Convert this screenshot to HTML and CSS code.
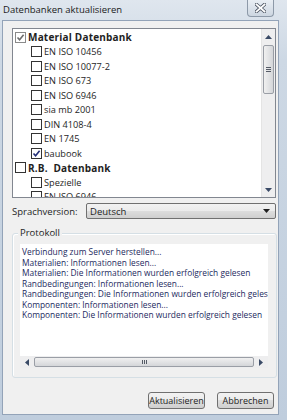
FILE: index.html
```html
<!DOCTYPE html>
<html lang="de">
<head>
    <meta charset="UTF-8">
    <title>Datenbanken aktualisieren</title>
    <link rel="stylesheet" href="styles.css">
</head>
<body>
    <div class="window">
        <div class="titlebar">
            <span class="title">Datenbanken aktualisieren</span>
            <span class="close">
                <svg width="11" height="10" viewBox="0 0 11 10">
                    <path d="M1.5 1.5 L9.5 8.5 M9.5 1.5 L1.5 8.5" stroke="#4a5260" stroke-width="3.4" stroke-linecap="square"/>
                    <path d="M1.5 1.5 L9.5 8.5 M9.5 1.5 L1.5 8.5" stroke="#ffffff" stroke-width="1.8" stroke-linecap="square"/>
                </svg>
            </span>
        </div>
        <div class="client">
            <div class="tree">
                <div class="tree-list">
                    <div class="row root"><span class="cb grey checked"><svg viewBox="0 0 9 9"><path d="M1.5 4.5 L3.6 6.8 L7.6 1.8" /></svg></span><b>Material Datenbank</b></div>
                    <div class="row child"><span class="cb"></span>EN ISO 10456</div>
                    <div class="row child"><span class="cb"></span>EN ISO 10077-2</div>
                    <div class="row child"><span class="cb"></span>EN ISO 673</div>
                    <div class="row child"><span class="cb"></span>EN ISO 6946</div>
                    <div class="row child"><span class="cb"></span>sia mb 2001</div>
                    <div class="row child"><span class="cb"></span>DIN 4108-4</div>
                    <div class="row child"><span class="cb"></span>EN 1745</div>
                    <div class="row child"><span class="cb checked"><svg viewBox="0 0 9 9"><path d="M1.5 4.5 L3.6 6.8 L7.6 1.8" /></svg></span>baubook</div>
                    <div class="row root"><span class="cb"></span><b>R.B.&nbsp; Datenbank</b></div>
                    <div class="row child"><span class="cb"></span>Spezielle</div>
                    <div class="row child"><span class="cb"></span>EN ISO 6946</div>
                </div>
                <div class="vscroll">
                    <span class="arrow"><svg width="7" height="4" viewBox="0 0 7 4"><path d="M0 4 L3.5 0 L7 4 Z" fill="#3a4a66"/></svg></span>
                    <div class="track">
                        <div class="thumb"><span class="grip"></span></div>
                    </div>
                    <span class="arrow"><svg width="7" height="4" viewBox="0 0 7 4"><path d="M0 0 L3.5 4 L7 0 Z" fill="#3a4a66"/></svg></span>
                </div>
            </div>

            <div class="lang-row">
                <span class="lang-label">Sprachversion:</span>
                <div class="select">
                    <span>Deutsch</span>
                    <svg width="7" height="4" viewBox="0 0 7 4"><path d="M0 0 L3.5 4 L7 0 Z" fill="#1f1f1f"/></svg>
                </div>
            </div>

            <div class="group">
                <span class="legend">Protokoll</span>
                <div class="log">
                    <div class="log-text">
                        <div>Verbindung zum Server herstellen...</div>
                        <div>Materialien: Informationen lesen...</div>
                        <div>Materialien: Die Informationen wurden erfolgreich gelesen</div>
                        <div>Randbedingungen: Informationen lesen...</div>
                        <div>Randbedingungen: Die Informationen wurden erfolgreich gelesen</div>
                        <div>Komponenten: Informationen lesen...</div>
                        <div>Komponenten: Die Informationen wurden erfolgreich gelesen</div>
                    </div>
                    <div class="hscroll">
                        <span class="harrow"><svg width="4" height="7" viewBox="0 0 4 7"><path d="M4 0 L0 3.5 L4 7 Z" fill="#3a4a66"/></svg></span>
                        <div class="hthumb"><span class="hgrip"></span></div>
                        <span class="harrow"><svg width="4" height="7" viewBox="0 0 4 7"><path d="M0 0 L4 3.5 L0 7 Z" fill="#3a4a66"/></svg></span>
                    </div>
                </div>
            </div>

            <div class="buttons">
                <button class="btn">Aktualisieren</button>
                <button class="btn">Abbrechen</button>
            </div>
        </div>
    </div>
</body>
</html>
```

FILE: styles.css
```css
body {
    margin: 0;
    font-family: 'Open Sans', 'Noto Sans', sans-serif;
    color: #1e1e1e;
}
.window {
    width: 287px;
    height: 420px;
    background: linear-gradient(to bottom, #dfe6ee 0px, #cdd8e4 60px, #bfcddd 420px);
    display: flex;
    flex-direction: column;
    overflow: hidden;
}
.titlebar {
    height: 20px;
    display: flex;
    justify-content: space-between;
    align-items: flex-start;
}
.title {
    font-size: 9.5px;
    line-height: 19px;
    padding-left: 3px;
    color: #1a1a1a;
}
.close {
    width: 25px;
    height: 16px;
    margin-right: 13px;
    border: 1px solid #8d99a8;
    border-top: none;
    border-radius: 0 0 4px 4px;
    background: linear-gradient(to bottom, #e9eef4, #cdd6e1);
    display: flex;
    align-items: center;
    justify-content: center;
}
.client {
    margin-left: 2px;
    width: 277px;
    height: 395px;
    box-sizing: border-box;
    border: 1px solid #93a3b8;
    background: #f0f0f0;
    padding: 7px 0 0 9px;
}
.tree {
    width: 264px;
    height: 170px;
    box-sizing: border-box;
    border: 1px solid #828790;
    background: #ffffff;
    display: flex;
    overflow: hidden;
}
.tree-list {
    flex: 1;
    padding-top: 1px;
    overflow: hidden;
}
.row {
    height: 14.5px;
    display: flex;
    align-items: center;
    font-size: 9.2px;
    white-space: nowrap;
}
.row b {
    font-weight: 700;
    font-size: 10px;
    letter-spacing: 0.2px;
}
.row.root {
    padding-left: 2px;
}
.row.child {
    padding-left: 18px;
}
.cb {
    width: 11px;
    height: 11px;
    box-sizing: border-box;
    border: 1px solid #333333;
    background: #ffffff;
    margin-right: 2px;
    flex: none;
    display: flex;
}
.cb.grey {
    border-color: #8a8a8a;
}
.cb svg {
    width: 9px;
    height: 9px;
    fill: none;
    stroke: #232f78;
    stroke-width: 1.6;
}
.cb.grey svg {
    stroke: #6d6d6d;
}
.vscroll {
    width: 13px;
    background: #eeeeef;
    border-left: 1px solid #e4e4e4;
    display: flex;
    flex-direction: column;
}
.arrow {
    height: 15px;
    display: flex;
    align-items: center;
    justify-content: center;
}
.track {
    flex: 1;
}
.thumb {
    margin: 1px 1px 0 1px;
    height: 49px;
    box-sizing: border-box;
    border: 1px solid #9a9ea6;
    border-radius: 2px;
    background: linear-gradient(to right, #f0f0f0, #e2e3e5 50%, #d4d6d9);
    display: flex;
    align-items: center;
    justify-content: center;
}
.grip {
    width: 5px;
    height: 5px;
    background: repeating-linear-gradient(to bottom, #555b66 0px, #555b66 1px, transparent 1px, transparent 2px);
}
.lang-row {
    width: 264px;
    margin-top: 5px;
    display: flex;
    align-items: center;
    justify-content: space-between;
}
.lang-label {
    font-size: 9.5px;
}
.select {
    width: 190px;
    height: 16px;
    box-sizing: border-box;
    border: 1px solid #707070;
    border-radius: 2px;
    background: linear-gradient(to bottom, #f2f2f2 0%, #ebebeb 50%, #dddddd 50%, #cfcfcf 100%);
    display: flex;
    align-items: center;
    justify-content: space-between;
    padding: 0 5px 0 3px;
    font-size: 9.5px;
}
.group {
    position: relative;
    width: 265px;
    height: 145px;
    box-sizing: border-box;
    margin-top: 14px;
    border: 1px solid #d5dfe5;
    border-radius: 3px;
    box-shadow: inset 1px 1px 0 #ffffff;
    padding: 10px 8px 0 7px;
}
.legend {
    position: absolute;
    left: 5px;
    top: -7px;
    padding: 0 2px;
    background: #f0f0f0;
    font-size: 9.5px;
    line-height: 12px;
}
.log {
    height: 124px;
    background: #ffffff;
    display: flex;
    flex-direction: column;
}
.log-text {
    flex: 1;
    padding: 3px 0 0 2px;
    font-size: 8.4px;
    line-height: 10.5px;
    color: #1d2a5e;
    white-space: nowrap;
    overflow: hidden;
}
.hscroll {
    height: 12px;
    background: #eeeeef;
    display: flex;
    align-items: stretch;
}
.harrow {
    width: 14px;
    display: flex;
    align-items: center;
    justify-content: center;
}
.hthumb {
    flex: 1;
    margin: 1px 0;
    border: 1px solid #9a9ea6;
    border-radius: 2px;
    background: linear-gradient(to bottom, #f0f0f0, #e2e3e5 50%, #d4d6d9);
    display: flex;
    align-items: center;
    justify-content: center;
}
.hgrip {
    width: 5px;
    height: 4px;
    background: repeating-linear-gradient(to right, #555b66 0px, #555b66 1px, transparent 1px, transparent 2px);
}
.buttons {
    width: 262px;
    margin-top: 14px;
    display: flex;
    justify-content: flex-end;
    gap: 12px;
}
.btn {
    width: 57px;
    height: 17px;
    padding: 0;
    border: 1px solid #707070;
    border-radius: 3px;
    background: linear-gradient(to bottom, #f2f2f2 0%, #ebebeb 50%, #dddddd 50%, #cfcfcf 100%);
    font-family: 'Open Sans', 'Noto Sans', sans-serif;
    font-size: 9px;
    color: #1e1e1e;
}
```
